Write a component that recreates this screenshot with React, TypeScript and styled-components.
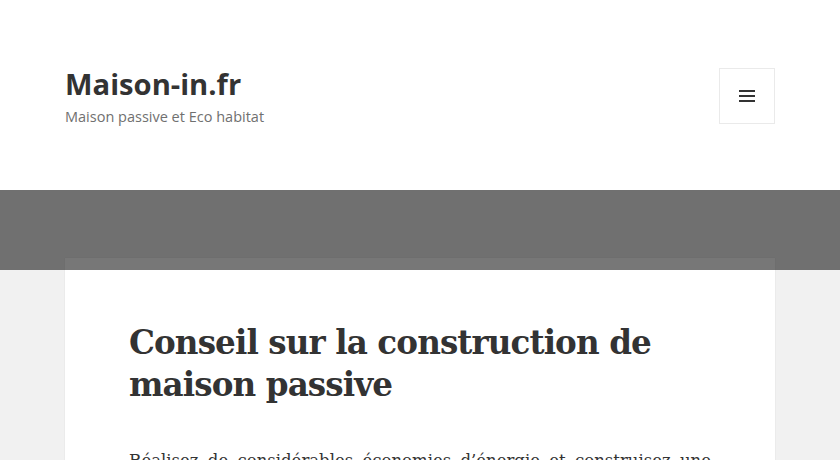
import React from "react";
import styled, { createGlobalStyle } from "styled-components";

const GlobalStyle = createGlobalStyle`
  html, body {
    margin: 0;
    padding: 0;
    background: #f1f1f1;
  }
  body {
    font-family: "Open Sans", "Noto Sans", sans-serif;
    color: #333;
  }
`;

const Page = styled.div`
  min-height: 100vh;
`;

const Header = styled.header`
  background: #fff;
  height: 190px;
  box-sizing: border-box;
  padding: 68px 65px 0 65px;
  display: flex;
  justify-content: space-between;
  align-items: flex-start;
`;

const Branding = styled.div`
  display: flex;
  flex-direction: column;
`;

const SiteTitle = styled.a`
  font-family: "Open Sans", sans-serif;
  font-weight: 700;
  font-size: 29.2px;
  line-height: 32px;
  color: #333;
  text-decoration: none;
`;

const Tagline = styled.p`
  margin: 6px 0 0 0;
  font-family: "Open Sans", sans-serif;
  font-size: 14.5px;
  line-height: 22px;
  color: #707070;
`;

const MenuToggle = styled.button`
  width: 56px;
  height: 56px;
  box-sizing: border-box;
  background: #fff;
  border: 1px solid #eaeaea;
  padding: 0;
  display: flex;
  align-items: center;
  justify-content: center;
  cursor: pointer;
`;

const Band = styled.div`
  position: relative;
  z-index: 2;
  height: 80px;
  background: rgba(0, 0, 0, 0.535);
`;

const Main = styled.main`
  padding: 0 65px;
`;

const Card = styled.article`
  position: relative;
  z-index: 1;
  margin-top: -12px;
  background: #fff;
  box-shadow: 0 0 1px rgba(0, 0, 0, 0.15);
  padding: 64px 64px 40px 64px;
`;

const EntryTitle = styled.h1`
  margin: 0;
  font-family: "DejaVu Serif", "Noto Serif", serif;
  font-weight: 700;
  font-size: 32.6px;
  line-height: 42px;
  letter-spacing: -0.9px;
  color: #333;
`;

const EntryContent = styled.div`
  margin-top: 41px;
  font-family: "DejaVu Serif", "Noto Serif", serif;
  font-size: 16.5px;
  line-height: 1.65;
  color: #333;
  text-align: justify;

  p {
    margin: 0 0 1.6em 0;
  }
`;

const MenuIcon = () => (
  <svg width="16" height="14" viewBox="0 0 16 14" aria-hidden="true">
    <rect x="0" y="1" width="16" height="2" fill="#333" />
    <rect x="0" y="6" width="16" height="2" fill="#333" />
    <rect x="0" y="11" width="16" height="2" fill="#333" />
  </svg>
);

export default function App() {
  return (
    <Page>
      <GlobalStyle />
      <Header>
        <Branding>
          <SiteTitle href="#">Maison-in.fr</SiteTitle>
          <Tagline>Maison passive et Eco habitat</Tagline>
        </Branding>
        <MenuToggle aria-label="Menu et widgets">
          <MenuIcon />
        </MenuToggle>
      </Header>
      <Band />
      <Main>
        <Card>
          <EntryTitle>Conseil sur la construction de maison passive</EntryTitle>
          <EntryContent>
            <p>
              Réalisez de considérables économies d’énergie et construisez une
              maison passive, confortable et respectueuse de l’environnement.
              Découvrez nos conseils pour bien préparer votre projet.
            </p>
          </EntryContent>
        </Card>
      </Main>
    </Page>
  );
}
